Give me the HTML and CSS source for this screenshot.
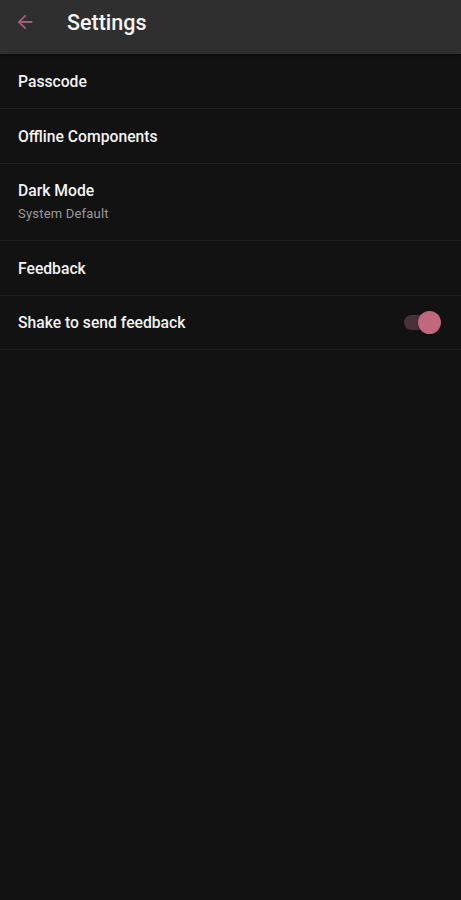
FILE: index.html
```html
<!DOCTYPE html>
<html lang="en">
<head>
    <meta charset="UTF-8">
    <meta name="viewport" content="width=device-width, initial-scale=1.0">
    <title>Settings</title>
    <link rel="stylesheet" href="styles.css">
</head>
<body>
    <div class="header">
        <svg class="back" width="22" height="22" viewBox="0 0 24 24">
            <path d="M20 11H7.83l5.59-5.59L12 4l-8 8 8 8 1.41-1.41L7.83 13H20v-2z" fill="#a9577a"/>
        </svg>
        <h1>Settings</h1>
    </div>
    <div class="list">
        <div class="row">
            <div class="title">Passcode</div>
        </div>
        <div class="row">
            <div class="title">Offline Components</div>
        </div>
        <div class="row tall">
            <div class="title">Dark Mode</div>
            <div class="sub">System Default</div>
        </div>
        <div class="row">
            <div class="title">Feedback</div>
        </div>
        <div class="row switch-row">
            <div class="title">Shake to send feedback</div>
            <div class="switch">
                <div class="track"></div>
                <div class="thumb"></div>
            </div>
        </div>
    </div>
</body>
</html>
```

FILE: styles.css
```css
* {
    margin: 0;
    padding: 0;
    box-sizing: border-box;
}
body {
    font-family: Roboto, "Noto Sans", sans-serif;
    background-color: #121212;
    color: #f2f2f2;
    min-height: 100vh;
}
.header {
    background-color: #2f2f2f;
    height: 54px;
    display: flex;
    align-items: flex-start;
    padding: 10px 0 0 14px;
    box-shadow: 0 1px 3px rgba(0, 0, 0, 0.6);
}
.back {
    display: block;
    margin-top: 1px;
}
.header h1 {
    font-size: 21.5px;
    line-height: 26px;
    font-weight: 500;
    margin-left: 31px;
    color: #f4f4f4;
}
.row {
    height: 55px;
    border-bottom: 1px solid #1e1e1e;
    padding: 0 18px;
    display: flex;
    flex-direction: column;
    justify-content: center;
}
.row.tall {
    height: 77px;
    padding-bottom: 2px;
}
.row:last-child {
    height: 54px;
}
.title {
    font-size: 15.7px;
    font-weight: 500;
}
.sub {
    font-size: 13px;
    letter-spacing: 0.2px;
    color: #9a9a9a;
    margin-top: 6px;
}
.switch-row {
    flex-direction: row;
    align-items: center;
    justify-content: space-between;
    padding-right: 20px;
}
.switch {
    position: relative;
    width: 37px;
    height: 23px;
}
.track {
    position: absolute;
    left: 0;
    top: 4px;
    width: 33px;
    height: 15px;
    border-radius: 8px;
    background-color: #4a3039;
}
.thumb {
    position: absolute;
    right: 0;
    top: 0;
    width: 23px;
    height: 23px;
    border-radius: 50%;
    background-color: #c0687f;
    box-shadow: 0 1px 2px rgba(0, 0, 0, 0.5);
}
```
